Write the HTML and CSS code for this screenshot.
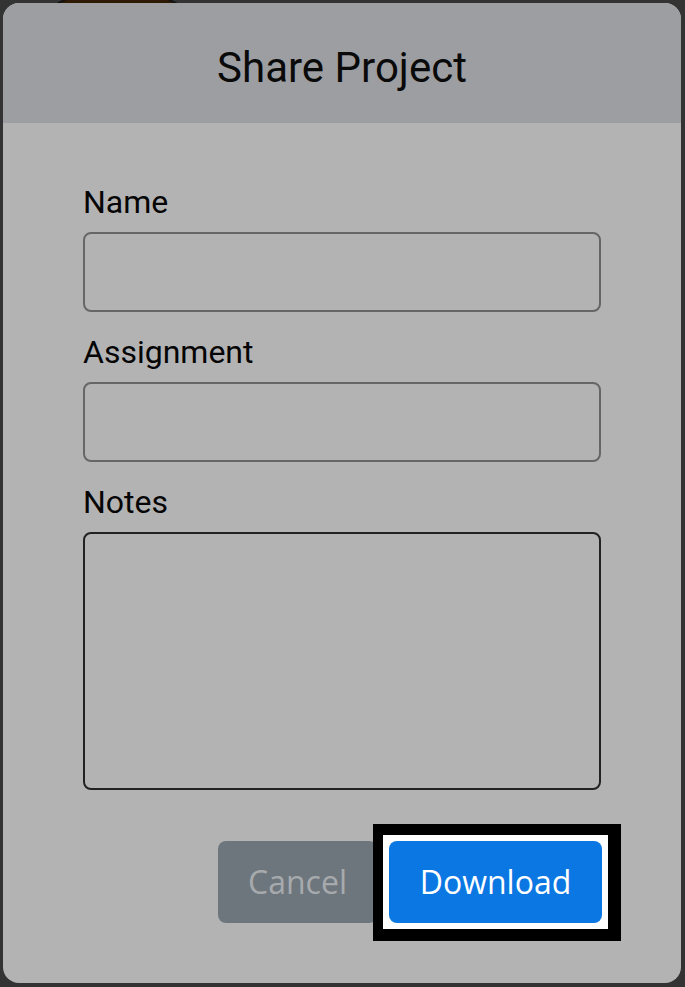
FILE: index.html
```html
<!DOCTYPE html>
<html lang="en">
<head>
<meta charset="utf-8">
<title>Share Project</title>
<link rel="stylesheet" href="styles.css">
</head>
<body>
<div class="dialog">
  <div class="dialog-header">
    <h1 class="dialog-title">Share Project</h1>
  </div>
  <form class="dialog-body">
    <label class="field-label" for="name">Name</label>
    <input class="field-input" id="name" type="text">
    <label class="field-label" for="assignment">Assignment</label>
    <input class="field-input" id="assignment" type="text">
    <label class="field-label" for="notes">Notes</label>
    <textarea class="field-notes" id="notes"></textarea>
    <div class="actions">
      <button type="button" class="btn btn-cancel">Cancel</button>
      <span class="focus-ring"><button type="button" class="btn btn-primary">Download</button></span>
    </div>
  </form>
</div>
</body>
</html>
```
FILE: styles.css
```css
html, body {
  margin: 0;
  padding: 0;
}
body {
  width: 685px;
  height: 987px;
  overflow: hidden;
  background-color: #333333;
  background-image: radial-gradient(circle at 117px 105px, #2e1a02 0, #2e1a02 116px, #111 117px, #111 118px, transparent 119px);
  background-size: 685px 3px;
  background-repeat: no-repeat;
  font-family: Roboto, "Liberation Sans", sans-serif;
  padding-top: 3px;
  box-sizing: border-box;
}
.dialog {
  margin-left: 3px;
  width: 678px;
  height: 980px;
  background: #b3b3b3;
  border-radius: 16px;
  overflow: hidden;
  display: flex;
  flex-direction: column;
}
.dialog-header {
  height: 120px;
  box-sizing: border-box;
  padding-top: 41px;
  background: #9d9ea2;
  text-align: center;
}
.dialog-title {
  margin: 0;
  font-size: 42px;
  font-weight: 400;
  line-height: 48px;
  color: #0a0a0a;
}
.dialog-body {
  margin: 0;
  padding: 60px 80px 0 80px;
  display: flex;
  flex-direction: column;
}
.field-label {
  display: block;
  font-size: 32px;
  line-height: 38px;
  color: #050505;
  margin-bottom: 11px;
}
.field-input,
.field-notes {
  display: block;
  box-sizing: border-box;
  width: 518px;
  margin: 0 0 21px 0;
  background: transparent;
  border: 2px solid #666666;
  border-radius: 8px;
  font: inherit;
  outline: none;
}
.field-input {
  height: 80px;
}
.field-notes {
  height: 258px;
  border-color: #222222;
  resize: none;
  margin-bottom: 51px;
}
.actions {
  display: flex;
  justify-content: flex-end;
  align-items: center;
  gap: 12px;
}
.btn {
  height: 82px;
  padding: 0 30px;
  border: none;
  border-radius: 8px;
  font-family: "Open Sans", "Liberation Sans", sans-serif;
  font-size: 32px;
  line-height: 42px;
}
.btn-cancel {
  width: 159px;
  background: #6e767d;
  color: #a7aaad;
}
.focus-ring {
  display: flex;
  margin-right: -1px;
  background: #ffffff;
  box-shadow: 0 0 0 6px #ffffff, 1.5px 0.5px 0 17.5px #000000;
}
.btn-primary {
  width: 213px;
  background: #0b77e3;
  color: #ffffff;
}
```
